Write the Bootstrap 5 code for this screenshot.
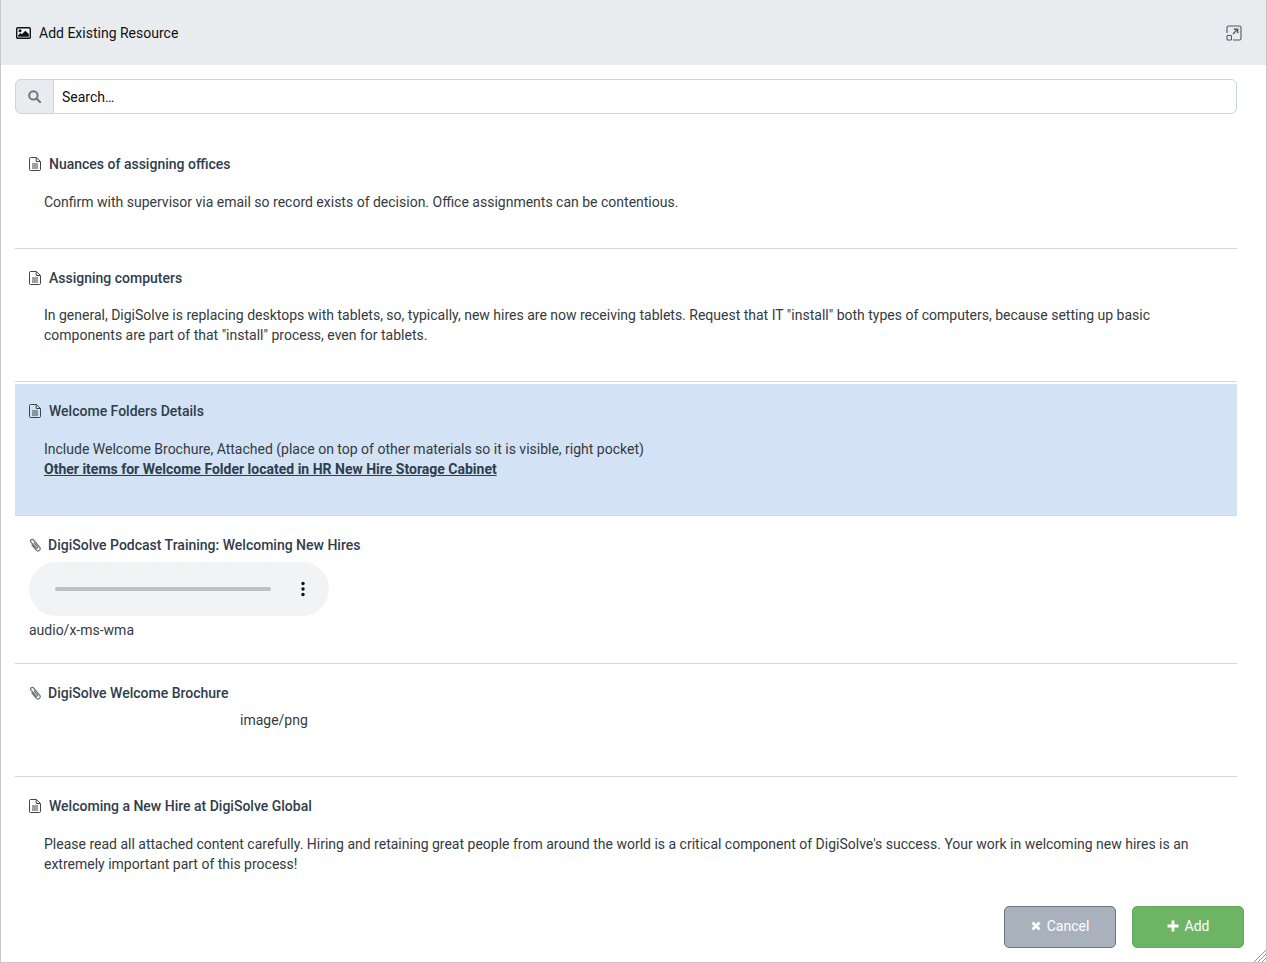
<!DOCTYPE html>
<html lang="en">
<head>
    <meta charset="UTF-8">
    <title>Add Existing Resource</title>
    <link href="https://cdn.jsdelivr.net/npm/bootstrap@5.3.0/dist/css/bootstrap.min.css" rel="stylesheet">
    <style>
        html, body { height: 100%; overflow: hidden; }
        body {
            font-family: Roboto, "Liberation Sans", sans-serif;
            font-size: 14px;
            line-height: 20px;
            color: #343a40;
        }
        .dialog-box {
            height: 963px;
            border: 1px solid #c9c9c9;
            border-top: 0;
            position: relative;
            background: #fff;
        }
        .dialog-head {
            height: 65px;
            background: #e9ecef;
            padding: 0 24px 0 15px;
            color: #111;
        }
        .dialog-body { padding: 14px 29px 0 14px; min-height: 0; overflow: hidden; }
        .search-group { height: 35px; }
        .search-group .input-group-text {
            width: 39px;
            padding: 0;
            justify-content: center;
            background: #e9ecef;
            border-color: #ced4da;
            border-radius: 6px 0 0 6px;
        }
        .search-group .form-control {
            font-size: 14px;
            padding: 2px 8px 0;
            color: #111;
            border-color: #ced4da;
            border-radius: 0 6px 6px 0;
        }
        .search-group .form-control::placeholder { color: #111; opacity: 1; }
        .res-list { margin-top: 21px; }
        .res-item {
            padding: 19px 14px 36px;
            border-bottom: 1px solid #d5d8db;
        }
        .res-item.picked {
            background: #d3e2f5;
            margin-top: 2px;
            padding-top: 17px;
        }
        .res-item.media { padding-bottom: 23px; }
        .res-item.media-img { padding-bottom: 46px; }
        .res-item:last-child { border-bottom: 0; padding-bottom: 0; }
        .res-title {
            font-weight: 500;
            color: #2f3d4c;
            display: flex;
            align-items: center;
            gap: 8px;
        }
        .res-title.clip { gap: 7px; }
        .res-text { margin: 18px 0 0 15px; }
        .res-text.tight { margin-top: 17px; }
        .res-text a { font-weight: 700; color: #2f3d4c; }
        .audio-pill {
            width: 300px;
            height: 54px;
            margin-top: 7px;
            border-radius: 27px;
            background: #f1f3f4;
            padding: 0 24px 0 26px;
        }
        .audio-track { width: 216px; height: 4px; border-radius: 2px; background: #bdbfc1; }
        .mime-line { margin-top: 4px; }
        .mime-img { margin: 7px 0 0 211px; }
        .dialog-foot { padding: 0 22px 14px 0; gap: 16px; flex: 0 0 auto; }
        .foot-btn {
            width: 112px;
            height: 42px;
            font-size: 14px;
            color: #fff;
            border-radius: 5px;
            gap: 6px;
            padding: 0 0 2px;
        }
        .foot-cancel { background: #a9b2bc; border: 1px solid #6c757d; }
        .foot-add { background: #6eb465; border: 1px solid #65aa5c; }
        .foot-btn:hover { color: #fff; }
        .foot-cancel:hover { background: #a9b2bc; border-color: #6c757d; }
        .foot-add:hover { background: #6eb465; border-color: #65aa5c; }
        .resize-grip { position: absolute; right: 0; bottom: 0; }
    </style>
</head>
<body>
    <div class="dialog-box d-flex flex-column">
        <div class="dialog-head d-flex align-items-center justify-content-between flex-shrink-0">
            <div class="d-flex align-items-center gap-2">
                <svg width="15" height="12" viewBox="0 0 15 12">
                    <rect x="0.7" y="0.7" width="13.600" height="10.600" rx="1" fill="#f4f4f4" stroke="#111" stroke-width="1.400"/>
                    <circle cx="4" cy="3.800" r="1.500" fill="#111"/>
                    <path d="M2.200 9.800V8.200l2.300-2.200 1.300 1.300L9.400 3.700l3.400 3.400v2.700z" fill="#111"/>
                </svg>
                <span>Add Existing Resource</span>
            </div>
            <svg width="16" height="16" viewBox="0 0 16 16" fill="none" stroke="#4f5a66" stroke-width="1.100">
                <path d="M1 8V2.500A1.500 1.500 0 0 1 2.500 1H13.500A1.500 1.500 0 0 1 15 2.500V13.500A1.500 1.500 0 0 1 13.500 15H7"/>
                <rect x="1" y="10.500" width="4.500" height="4.500" rx="0.800"/>
                <path d="M7 9l4.500-4.500M7.800 4.300h3.900v3.900" stroke-width="1.400"/>
            </svg>
        </div>

        <div class="dialog-body flex-grow-1">
            <div class="input-group search-group">
                <span class="input-group-text">
                    <svg width="13" height="13" viewBox="0 0 13 13" fill="none" stroke="#6c757d" stroke-width="2">
                        <circle cx="5.400" cy="5.400" r="4.200"/>
                        <path d="M8.500 8.500l3.700 3.700" stroke-linecap="round"/>
                    </svg>
                </span>
                <input type="text" class="form-control" placeholder="Search…">
            </div>

            <div class="res-list">
                <div class="res-item">
                    <div class="res-title">
                        <svg width="12" height="14" viewBox="0 0 12 14" fill="none" stroke="#3d444b"><path d="M.5 1.500a1 1 0 0 1 1-1h5.800l4.200 4v8a1 1 0 0 1-1 1h-9a1 1 0 0 1-1-1zM7.200.7v3.800h4M3 7h6M3 9h6M3 11h6"/></svg>
                        <span>Nuances of assigning offices</span>
                    </div>
                    <div class="res-text">Confirm with supervisor via email so record exists of decision. Office assignments can be contentious.</div>
                </div>
                <div class="res-item">
                    <div class="res-title">
                        <svg width="12" height="14" viewBox="0 0 12 14" fill="none" stroke="#3d444b"><path d="M.5 1.500a1 1 0 0 1 1-1h5.800l4.200 4v8a1 1 0 0 1-1 1h-9a1 1 0 0 1-1-1zM7.200.7v3.800h4M3 7h6M3 9h6M3 11h6"/></svg>
                        <span>Assigning computers</span>
                    </div>
                    <div class="res-text tight">In general, DigiSolve is replacing desktops with tablets, so, typically, new hires are now receiving tablets. Request that IT "install" both types of computers, because setting up basic components are part of that "install" process, even for tablets.</div>
                </div>
                <div class="res-item picked">
                    <div class="res-title">
                        <svg width="12" height="14" viewBox="0 0 12 14" fill="none" stroke="#3d444b"><path d="M.5 1.500a1 1 0 0 1 1-1h5.800l4.200 4v8a1 1 0 0 1-1 1h-9a1 1 0 0 1-1-1zM7.200.7v3.800h4M3 7h6M3 9h6M3 11h6"/></svg>
                        <span>Welcome Folders Details</span>
                    </div>
                    <div class="res-text">Include Welcome Brochure, Attached (place on top of other materials so it is visible, right pocket)<br><a href="#">Other items for Welcome Folder located in HR New Hire Storage Cabinet</a></div>
                </div>
                <div class="res-item media">
                    <div class="res-title clip">
                        <svg width="12" height="14" viewBox="0 0 12 14" fill="none" stroke="#6c757d" stroke-width="1.200"><path d="M4.800 4.600l3.600 4.200a.9.9 0 0 1-1.400 1.200L2 4.200a1.700 1.700 0 0 1 2.600-2.200l6 7.200a2.200 2.200 0 0 1-3.400 2.900L2.600 6.700"/></svg>
                        <span>DigiSolve Podcast Training: Welcoming New Hires</span>
                    </div>
                    <div class="audio-pill d-flex align-items-center justify-content-between">
                        <div class="audio-track"></div>
                        <svg width="4" height="16" viewBox="0 0 4 16" fill="#111"><circle cx="2" cy="2.500" r="1.700"/><circle cx="2" cy="8" r="1.700"/><circle cx="2" cy="13.500" r="1.700"/></svg>
                    </div>
                    <div class="mime-line">audio/x-ms-wma</div>
                </div>
                <div class="res-item media-img">
                    <div class="res-title clip">
                        <svg width="12" height="14" viewBox="0 0 12 14" fill="none" stroke="#6c757d" stroke-width="1.200"><path d="M4.800 4.600l3.600 4.200a.9.9 0 0 1-1.400 1.200L2 4.200a1.700 1.700 0 0 1 2.600-2.200l6 7.200a2.200 2.200 0 0 1-3.400 2.900L2.600 6.700"/></svg>
                        <span>DigiSolve Welcome Brochure</span>
                    </div>
                    <div class="mime-img">image/png</div>
                </div>
                <div class="res-item">
                    <div class="res-title">
                        <svg width="12" height="14" viewBox="0 0 12 14" fill="none" stroke="#3d444b"><path d="M.5 1.500a1 1 0 0 1 1-1h5.800l4.200 4v8a1 1 0 0 1-1 1h-9a1 1 0 0 1-1-1zM7.200.7v3.800h4M3 7h6M3 9h6M3 11h6"/></svg>
                        <span>Welcoming a New Hire at DigiSolve Global</span>
                    </div>
                    <div class="res-text">Please read all attached content carefully. Hiring and retaining great people from around the world is a critical component of DigiSolve's success. Your work in welcoming new hires is an extremely important part of this process!</div>
                </div>
            </div>
        </div>

        <div class="dialog-foot d-flex justify-content-end">
            <button type="button" class="btn foot-btn foot-cancel d-flex align-items-center justify-content-center">
                <svg width="10" height="10" viewBox="0 0 10 10" stroke="#fff" stroke-width="2.800"><path d="M1.500 1.500l7 7M8.500 1.500l-7 7"/></svg>
                <span>Cancel</span>
            </button>
            <button type="button" class="btn foot-btn foot-add d-flex align-items-center justify-content-center">
                <svg width="12" height="12" viewBox="0 0 12 12" stroke="#fff" stroke-width="2.800"><path d="M6 .5v11M.5 6h11"/></svg>
                <span>Add</span>
            </button>
        </div>

        <svg class="resize-grip" width="13" height="13" viewBox="0 0 13 13" stroke="#9a9a9a" stroke-width="1"><path d="M1 13L13 1M5 13l8-8M9 13l4-4"/></svg>
    </div>
</body>
</html>
